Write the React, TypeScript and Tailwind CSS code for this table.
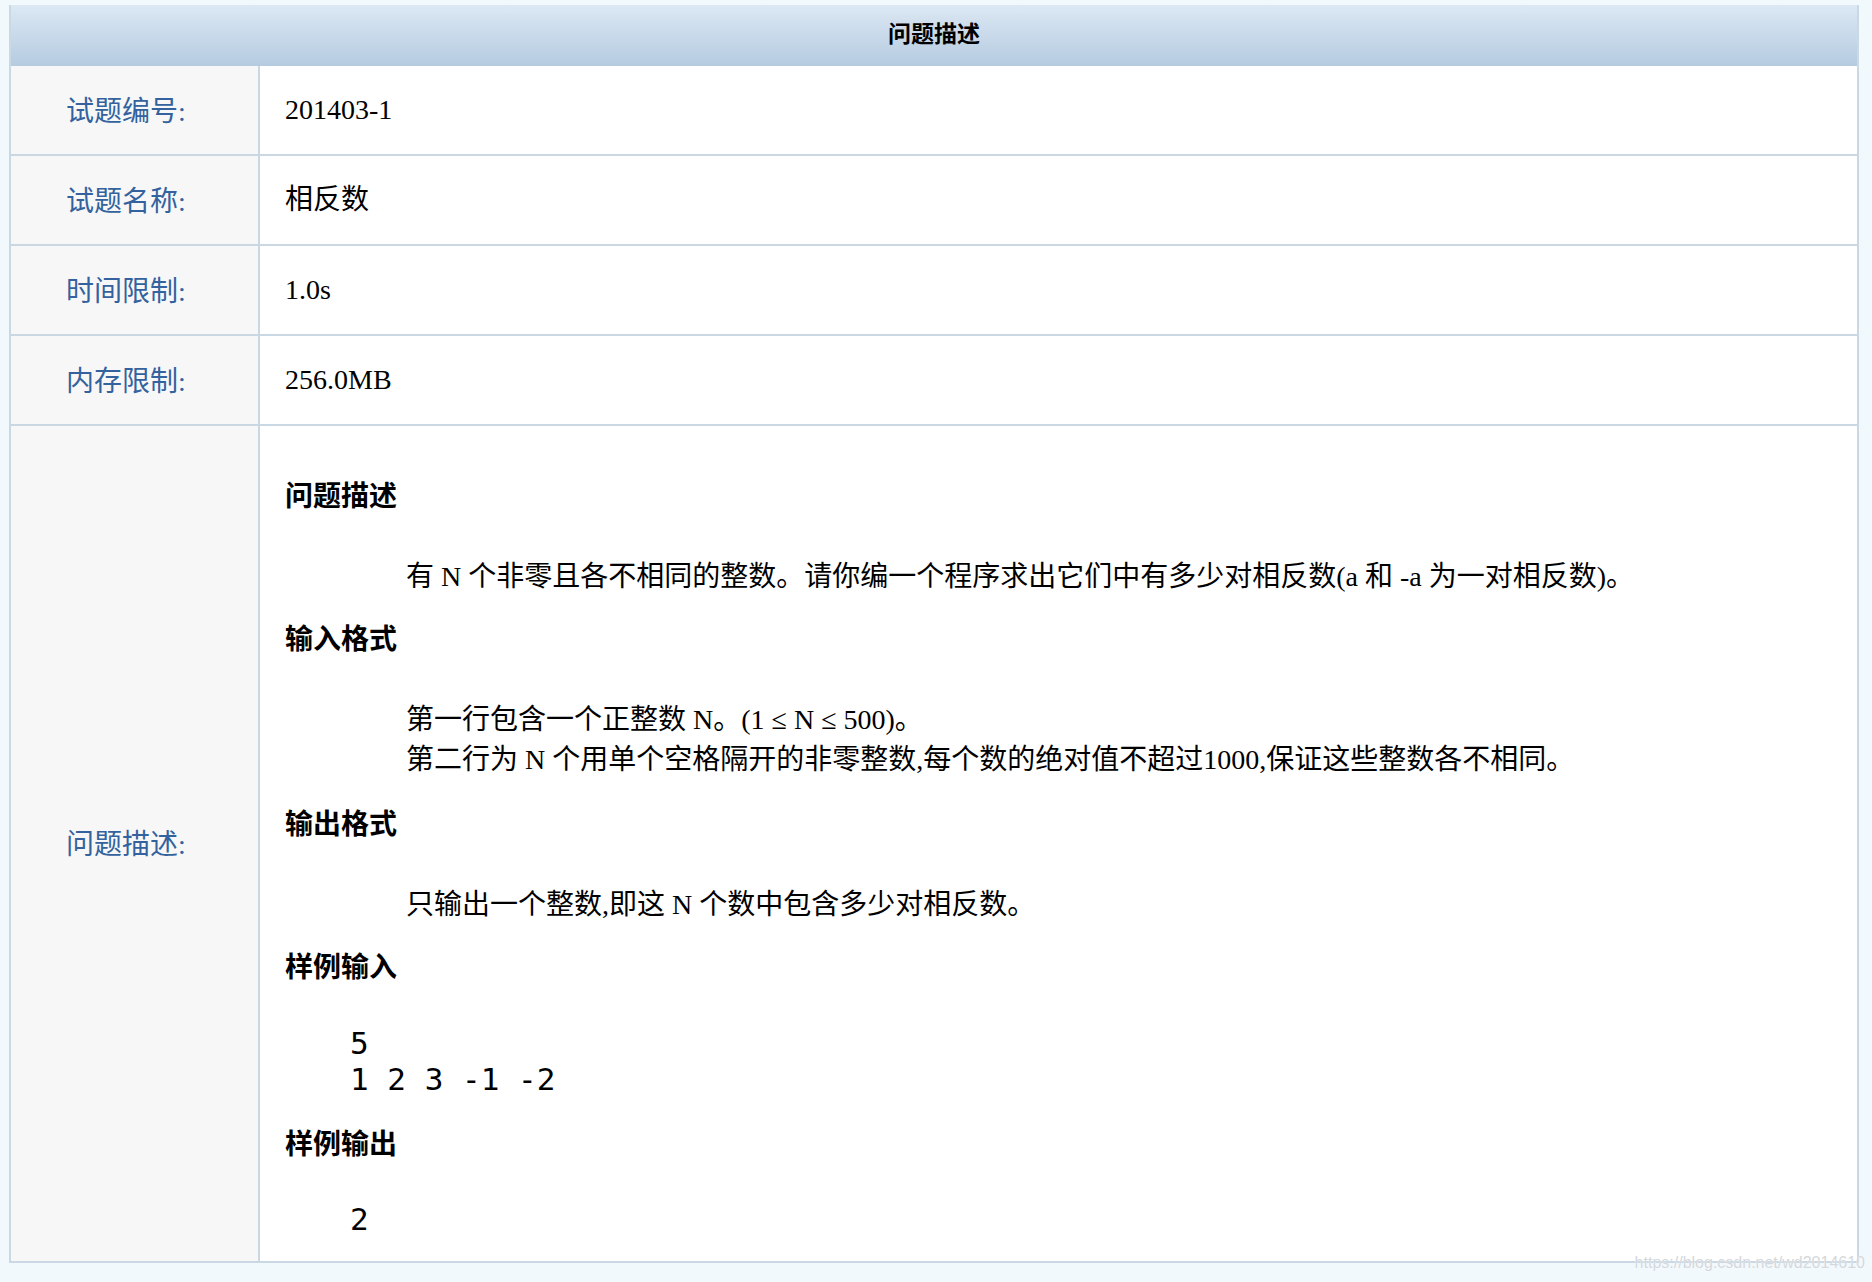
import React from "react";

const serif = "font-['Liberation_Serif','Noto_Sans_CJK_SC',serif]";

function InfoRow({ label, value }: { label: string; value: string }) {
  return (
    <div className="flex h-[90px] border-b-2 border-[#c9d8e3]">
      <div className="flex w-[249px] shrink-0 items-center border-r-2 border-[#c9d8e3] bg-[#f7f7f7] pl-[55px] pt-[3px] text-[28px] text-[#33629e]">
        {label}
      </div>
      <div className="flex flex-1 items-center bg-white pl-[25px] text-[28px] text-black">
        {value}
      </div>
    </div>
  );
}

function Heading({ children, className = "" }: { children: React.ReactNode; className?: string }) {
  return <div className={`h-[40px] text-[28px] font-bold leading-[40px] ${className}`}>{children}</div>;
}

function Para({ children, className = "" }: { children: React.ReactNode; className?: string }) {
  return <div className={`pl-[121px] text-[28px] leading-[40px] ${className}`}>{children}</div>;
}

function Mono({ lines, className = "" }: { lines: string[]; className?: string }) {
  return (
    <div className={`pl-[65px] font-['DejaVu_Sans_Mono',monospace] text-[31px] leading-[36px] whitespace-pre ${className}`}>
      {lines.map((l, i) => (
        <div key={i}>{l}</div>
      ))}
    </div>
  );
}

export default function App() {
  return (
    <div className={`min-h-screen bg-[#f2f9fd] pb-[20px] pl-[9px] pr-[13px] pt-[5px] ${serif}`}>
      <div className="relative border-x-2 border-b-2 border-[#c9d8e3]">
        <div className="flex h-[61px] items-center justify-center bg-gradient-to-b from-[#dce8f4] to-[#b5cbe0] text-[23px] font-bold text-black">
          问题描述
        </div>
        <div className="border-t-2 border-[#cfdde6]" />
        <div className="-mt-[2px]">
          <InfoRow label="试题编号:" value="201403-1" />
          <InfoRow label="试题名称:" value="相反数" />
          <InfoRow label="时间限制:" value="1.0s" />
          <InfoRow label="内存限制:" value="256.0MB" />
          <div className="flex">
            <div className="flex w-[249px] shrink-0 items-center border-r-2 border-[#c9d8e3] bg-[#f7f7f7] pl-[55px] pt-[3px] text-[28px] text-[#33629e]">
              问题描述:
            </div>
            <div className="flex-1 bg-white pb-[24px] pl-[25px] pt-[51px] text-black">
              <Heading>问题描述</Heading>
              <Para className="mt-[40px]">
                有 N 个非零且各不相同的整数。请你编一个程序求出它们中有多少对相反数(a 和 -a 为一对相反数)。
              </Para>
              <Heading className="mt-[23px]">输入格式</Heading>
              <Para className="mt-[40px]">
                <div>第一行包含一个正整数 N。(1 ≤ N ≤ 500)。</div>
                <div>第二行为 N 个用单个空格隔开的非零整数,每个数的绝对值不超过1000,保证这些整数各不相同。</div>
              </Para>
              <Heading className="mt-[25px]">输出格式</Heading>
              <Para className="mt-[40px]">只输出一个整数,即这 N 个数中包含多少对相反数。</Para>
              <Heading className="mt-[23px]">样例输入</Heading>
              <Mono className="mt-[37px]" lines={["5", "1 2 3 -1 -2"]} />
              <Heading className="mt-[28px]">样例输出</Heading>
              <Mono className="mt-[36px]" lines={["2"]} />
            </div>
          </div>
        </div>
        <div className="absolute -bottom-[12px] right-[-8px] font-['Liberation_Sans',sans-serif] text-[16px] leading-[20px] text-[#d4d8dc] [text-shadow:0_0_1px_#ffffff]">
          https://blog.csdn.net/wd2014610
        </div>
      </div>
    </div>
  );
}
